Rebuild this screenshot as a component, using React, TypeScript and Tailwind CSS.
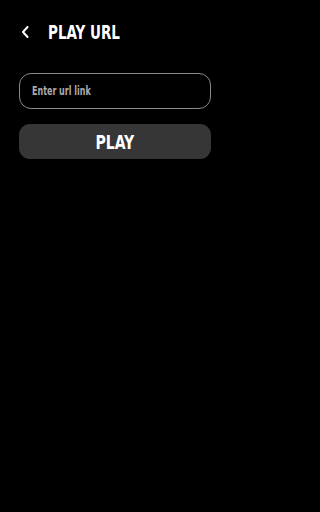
import React from 'react';

const font = { fontFamily: "'DejaVu Sans Condensed', 'DejaVu Sans', sans-serif" };

const App: React.FC = () => {
  return (
    <div className="w-full min-h-screen bg-black text-white pt-[24px]" style={font}>
      {/* Header */}
      <div className="flex items-center h-[16px] pl-[21px]">
        <svg width="8" height="12" viewBox="0 0 8 12" className="shrink-0">
          <path d="M6.5 1 L2 6 L6.5 11" fill="none" stroke="white" strokeWidth="2" strokeLinecap="round" strokeLinejoin="round" />
        </svg>
        <h1 className="ml-[19px] text-[20px] leading-none font-bold origin-left scale-x-[0.75] whitespace-nowrap">
          PLAY URL
        </h1>
      </div>

      <div className="w-[230px] px-[19px] mt-[33px] flex flex-col gap-[15px]">
        <div className="h-[36px] rounded-[12px] border border-[#8a8a8a] flex items-center pl-[12px]">
          <span className="text-[12px] leading-none font-bold text-[#ababab] origin-left scale-x-[0.74] whitespace-nowrap">
            Enter url link
          </span>
        </div>
        <button className="h-[35px] rounded-[11px] bg-[#363636] flex items-center justify-center">
          <span className="text-[20px] leading-none font-bold text-white scale-x-[0.78]">PLAY</span>
        </button>
      </div>
    </div>
  );
};

export default App;
